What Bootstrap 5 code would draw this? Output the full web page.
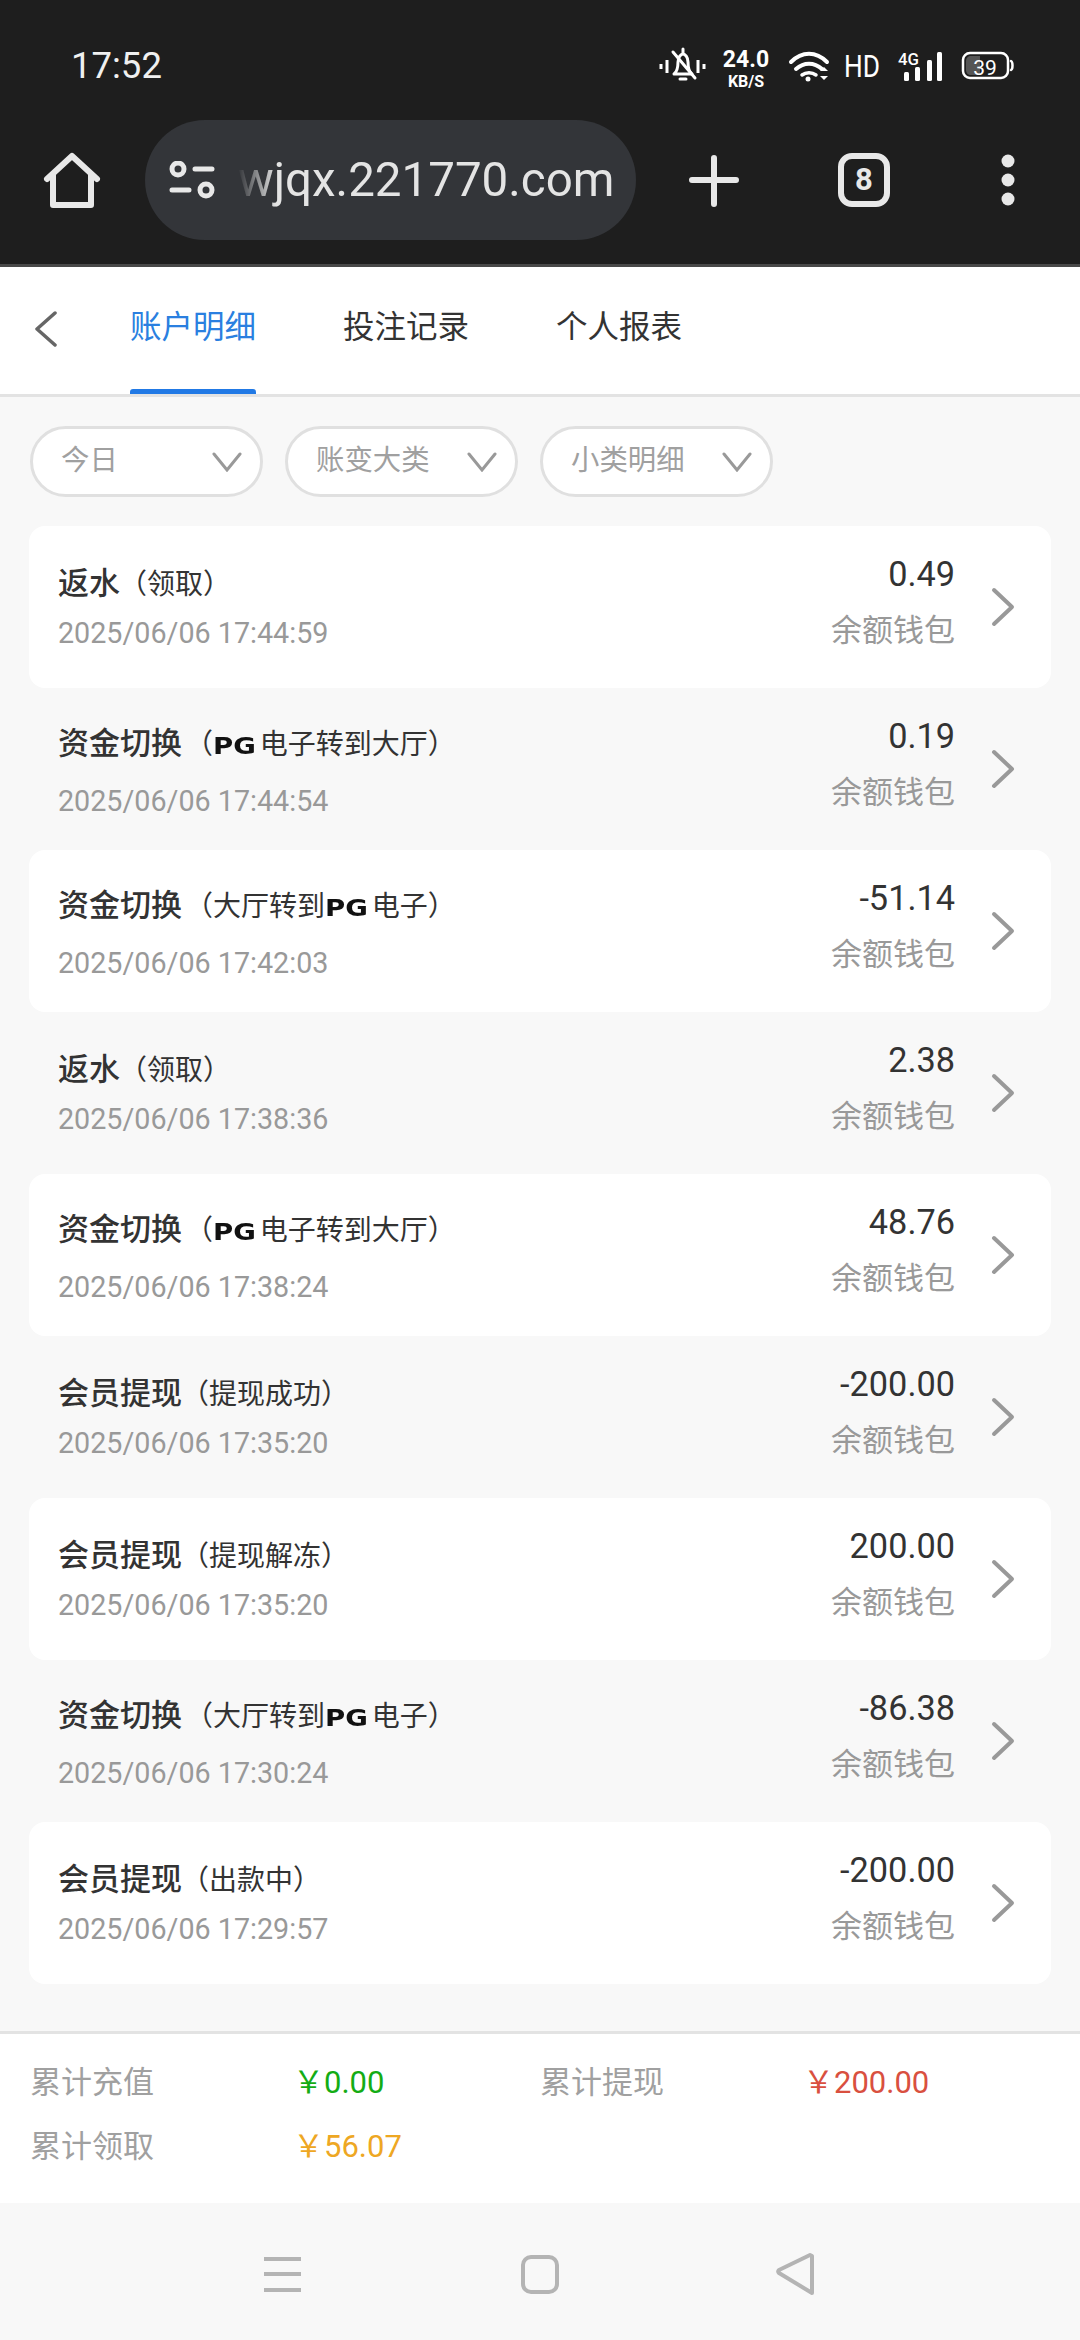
<!DOCTYPE html>
<html lang="zh-CN">
<head>
  <meta charset="UTF-8" />
  <meta name="viewport" content="width=device-width, initial-scale=1" />
  <title>账户明细</title>
  <link href="https://cdn.jsdelivr.net/npm/bootstrap@5.3.0/dist/css/bootstrap.min.css" rel="stylesheet">
  <style>
    html, body { height: 2340px; }
    body { width: 1080px; background: #f8f8f8; color: #333; overflow: hidden;
      font-family: Roboto, "Noto Sans CJK SC", sans-serif; }

    /* browser chrome */
    .chrome-top { height: 267px; background: #1e1e1e; border-bottom: 3px solid #484848; color: #e8e8e8; }
    .status-row { height: 120px; padding: 0 0 0 71px; position: relative; }
    .clock { font-size: 36.5px; line-height: 40px; margin-top: 46px; color: #f0f0f0; }
    .status-icons { position: absolute; top: 0; left: 0; }
    .net-speed { position: absolute; left: 718px; top: 48px; width: 56px; text-align: center;
      font-weight: 700; color: #fff; line-height: 1; }
    .net-speed b { display: block; font-size: 23px; font-weight: 700; }
    .net-speed i { display: block; font-size: 16px; font-style: normal; margin-top: 3px; }
    .tool-row { height: 120px; position: relative; }
    .url-pill { width: 491px; height: 120px; margin-left: 145px; border-radius: 60px; background: #333539;
      padding-left: 24px; gap: 23px; }
    .url-text { font-size: 47.5px; line-height: 120px; color: #e4e4e4; white-space: nowrap;
      -webkit-mask-image: linear-gradient(90deg, transparent 0, #000 38px); mask-image: linear-gradient(90deg, transparent 0, #000 38px); }
    .tool-icon { position: absolute; top: 0; }
    .tab-num { position: absolute; left: 838px; top: 33px; width: 52px; height: 54px; text-align: center;
      font-size: 31px; font-weight: 700; line-height: 54px; color: #e8e8e8; }

    /* tabs */
    .tab-bar { height: 130px; background: #fff; border-bottom: 3px solid #e3e3e3; position: relative; }
    .tab-back { position: absolute; left: 33px; top: 44px; }
    .tab-link { position: absolute; top: 0; height: 127px; width: 126px; font-size: 31.5px; line-height: 122px;
      color: #333; text-align: center; white-space: nowrap; }
    .tab-on { color: #2a7fe0; }
    .tab-on::after { content: ""; position: absolute; left: 0; right: 0; bottom: 0; height: 5px;
      border-radius: 3px 3px 0 0; background: #2179e5; }

    /* filters */
    .filter-row { padding: 29px 30px; gap: 22px; }
    .filter-pill { width: 233px; height: 71px; background: #fff; border: 3px solid #e0e0e0; border-radius: 36px;
      padding: 0 18px 0 28px; font-size: 28.4px; color: #a0a0a0; }

    /* records */
    .rec-list { padding: 0 29px; }
    .rec-row { height: 162px; border-radius: 16px; padding: 0 36px 0 29px; }
    .rec-row:nth-child(odd) { background: #fff; }
    .rec-title { padding-top: 38px; line-height: 40px; font-size: 28px; color: #333; white-space: nowrap; }
    .rec-title strong { font-size: 31px; font-weight: 500; margin-right: -1px; }
    .rec-date { margin-top: 10px; line-height: 36px; font-size: 28.7px; color: #999; }
    .has-pg .rec-title { padding-top: 36px; }
    .has-pg .rec-title strong { margin-right: 3px; }
    .has-pg .rec-date { margin-top: 17px; }
    .pg-mark { font-family: "DejaVu Sans", sans-serif; font-weight: 700; font-size: 23px;
      color: #111; margin: 0 4px 0 0; display: inline-block; transform: scaleX(1.2); transform-origin: left center; padding-right: 7px; }
    .rec-right { padding-top: 28px; width: 190px; text-align: right; margin-right: 36px; }
    .rec-amount { font-size: 34.3px; line-height: 40px; color: #333; }
    .rec-wallet { margin-top: 17px; font-size: 31px; line-height: 40px; color: #999; white-space: nowrap; }

    /* summary */
    .sum-box { background: #fff; border-top: 3px solid #e3e3e3; height: 172px; padding: 29px 30px 0;
      display: grid; grid-template-columns: 267px 243px 267px 1fr; grid-auto-rows: 40px; row-gap: 24px; }
    .sum-label { font-size: 31px; line-height: 40px; color: #a0a0a0; }
    .sum-val { font-size: 31px; line-height: 40px; margin-left: -4px; }
    .val-green { color: #14ac14; }
    .val-red { color: #d9503f; }
    .val-orange { color: #eea723; }

    /* android nav */
    .phone-nav { height: 137px; background: #f8f8f8; position: relative; }
    .phone-nav svg { position: absolute; left: 0; top: 0; }
  </style>
</head>

<body class="d-flex flex-column">

  <!-- browser chrome -->
  <header class="chrome-top">
    <div class="status-row d-flex align-items-start">
      <span class="clock">17:52</span>
      <svg class="status-icons" width="1080" height="120" viewBox="0 0 1080 120" fill="none" stroke="#fff">
        <!-- muted bell -->
        <path d="M661 64v5M667 60v13M698 60v13M704 64v5" stroke-width="3"/>
        <path d="M674 74c4-3 4-8 4-12 0-5 3-8 5-8s5 3 5 8c0 4 0 9 4 12z" stroke-width="3" stroke-linejoin="round"/>
        <path d="M683 49v4M680 79h6M673 52l22 26" stroke-width="3" stroke-linecap="round"/>
        <!-- wifi -->
        <path d="M791 62c11-11 25-11 36 0" stroke-width="4" stroke-linecap="round"/>
        <path d="M796 69c8-7 18-7 26 0" stroke-width="4" stroke-linecap="round"/>
        <path d="M802 75c4-3 10-3 14 0" stroke-width="3.5" stroke-linecap="round"/>
        <circle cx="808" cy="79" r="2.5" fill="#fff" stroke="none"/>
        <path d="M820 71l4-4 4 4zM820 76l4 4 4-4z" fill="#fff" stroke="none"/>
        <!-- signal bars -->
        <rect x="904" y="72" width="5" height="9" rx="1.5" fill="#fff" stroke="none"/>
        <rect x="915" y="67" width="5" height="14" rx="1.5" fill="#fff" stroke="none"/>
        <rect x="927" y="60" width="5" height="21" rx="1.5" fill="#fff" stroke="none"/>
        <rect x="937" y="52" width="5" height="29" rx="1.5" fill="#fff" stroke="none"/>
        <!-- battery -->
        <rect x="963" y="53" width="45" height="25" rx="7" stroke-width="2.5"/>
        <path d="M966 61c0-3 2-5 5-5h9v19h-9c-3 0-5-2-5-5z" fill="#555" stroke="none"/>
        <path d="M1011 61c2 1 2 8 0 9" stroke-width="2.5" stroke-linecap="round"/>
        <text x="985" y="75" text-anchor="middle" font-family="Roboto, sans-serif" font-size="21" fill="#fff" stroke="none">39</text>
        <text x="844" y="77" font-family="Roboto, sans-serif" font-size="31" fill="#fff" stroke="none" textLength="36" lengthAdjust="spacingAndGlyphs">HD</text>
        <text x="898" y="65" font-family="Roboto, sans-serif" font-size="16" font-weight="500" fill="#fff" stroke="none" textLength="21" lengthAdjust="spacingAndGlyphs">4G</text>
      </svg>
      <div class="net-speed"><b>24.0</b><i>KB/S</i></div>
    </div>
    <div class="tool-row">
      <svg class="tool-icon" style="left:0" width="120" height="120" viewBox="0 0 120 120" fill="none" stroke="#e8e8e8" stroke-width="6" stroke-linejoin="round" stroke-linecap="round">
        <path d="M47 59 L72 36 L97 59"/>
        <path d="M53 55V85H91V55"/>
      </svg>
      <div class="url-pill d-flex align-items-center">
        <svg width="46" height="38" viewBox="0 0 46 38" fill="none" stroke="#e8e8e8" stroke-width="5" stroke-linecap="round" class="flex-shrink-0">
          <circle cx="9" cy="8" r="6"/>
          <path d="M26 8h17M3 29h17"/>
          <circle cx="37" cy="29" r="6"/>
        </svg>
        <div class="url-text">wjqx.221770.com</div>
      </div>
      <svg class="tool-icon" style="left:680px" width="400" height="120" viewBox="680 0 400 120" fill="none" stroke="#e8e8e8" stroke-linecap="round">
        <path d="M714 38V84M692 60H736" stroke-width="6"/>
        <rect x="841" y="36" width="46" height="48" rx="11" stroke-width="6"/>
        <circle cx="1008" cy="41" r="6.5" fill="#e8e8e8" stroke="none"/>
        <circle cx="1008" cy="60" r="6.5" fill="#e8e8e8" stroke="none"/>
        <circle cx="1008" cy="79" r="6.5" fill="#e8e8e8" stroke="none"/>
      </svg>
      <div class="tab-num">8</div>
    </div>
  </header>

  <!-- tabs -->
  <nav class="tab-bar">
    <svg class="tab-back" width="26" height="36" viewBox="0 0 26 36" fill="none" stroke="#666" stroke-width="3.5" stroke-linecap="round" stroke-linejoin="round">
      <path d="M22 2 L4 18 L22 34"/>
    </svg>
    <div class="tab-link tab-on" style="left:130px">账户明细</div>
    <div class="tab-link" style="left:343px">投注记录</div>
    <div class="tab-link" style="left:556px">个人报表</div>
  </nav>

  <main class="flex-grow-1">
    <div class="filter-row d-flex">
      <div class="filter-pill d-flex align-items-center justify-content-between"><span>今日</span><svg width="30" height="20" viewBox="0 0 30 20" fill="none" stroke="#999" stroke-width="3" stroke-linecap="round"><path d="M2 2 L15 18 L28 2"/></svg></div>
      <div class="filter-pill d-flex align-items-center justify-content-between"><span>账变大类</span><svg width="30" height="20" viewBox="0 0 30 20" fill="none" stroke="#999" stroke-width="3" stroke-linecap="round"><path d="M2 2 L15 18 L28 2"/></svg></div>
      <div class="filter-pill d-flex align-items-center justify-content-between"><span>小类明细</span><svg width="30" height="20" viewBox="0 0 30 20" fill="none" stroke="#999" stroke-width="3" stroke-linecap="round"><path d="M2 2 L15 18 L28 2"/></svg></div>
    </div>
    <div class="rec-list" id="records"></div>
  </main>

  <!-- totals -->
  <section class="sum-box">
    <div class="sum-label">累计充值</div><div class="sum-val val-green">￥0.00</div>
    <div class="sum-label">累计提现</div><div class="sum-val val-red">￥200.00</div>
    <div class="sum-label">累计领取</div><div class="sum-val val-orange">￥56.07</div>
  </section>

  <!-- android nav -->
  <footer class="phone-nav">
    <svg width="1080" height="137" viewBox="0 2203 1080 137" fill="none" stroke="#b4b4b4" stroke-width="4">
      <path d="M264 2259H301M264 2274H301M264 2290H301"/>
      <rect x="523" y="2257" width="34" height="35" rx="8"/>
      <path d="M812 2256V2293L779 2273C778 2272 778 2271 779 2270L810 2255Z" stroke-linejoin="round"/>
    </svg>
  </footer>

  <script>
    const PG = '<span class="pg-mark">PG</span>';
    const rows = [
      ['返水', '（领取）', '17:44:59', '0.49'],
      ['资金切换', '（' + PG + '电子转到大厅）', '17:44:54', '0.19', true],
      ['资金切换', '（大厅转到' + PG + '电子）', '17:42:03', '-51.14', true],
      ['返水', '（领取）', '17:38:36', '2.38'],
      ['资金切换', '（' + PG + '电子转到大厅）', '17:38:24', '48.76', true],
      ['会员提现', '（提现成功）', '17:35:20', '-200.00'],
      ['会员提现', '（提现解冻）', '17:35:20', '200.00'],
      ['资金切换', '（大厅转到' + PG + '电子）', '17:30:24', '-86.38', true],
      ['会员提现', '（出款中）', '17:29:57', '-200.00']
    ];
    document.getElementById('records').innerHTML = rows.map(r => `
      <div class="rec-row d-flex ${r[4] ? 'has-pg' : ''}">
        <div class="flex-grow-1">
          <div class="rec-title"><strong>${r[0]}</strong>${r[1]}</div>
          <div class="rec-date">2025/06/06 ${r[2]}</div>
        </div>
        <div class="rec-right">
          <div class="rec-amount">${r[3]}</div>
          <div class="rec-wallet">余额钱包</div>
        </div>
        <svg class="align-self-center" width="24" height="40" viewBox="0 0 24 40" fill="none" stroke="#999" stroke-width="4" stroke-linecap="round" stroke-linejoin="round"><path d="M3 3 L21 20 L3 37"/></svg>
      </div>`).join('');
  </script>
  <script src="https://cdn.jsdelivr.net/npm/bootstrap@5.3.0/dist/js/bootstrap.bundle.min.js"></script>
</body>
</html>
